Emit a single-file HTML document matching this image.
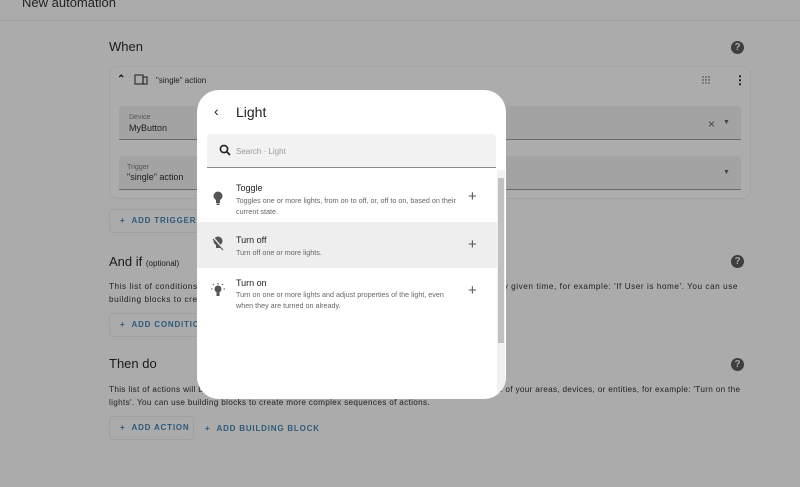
<!DOCTYPE html>
<html><head><style>
*{box-sizing:border-box;margin:0;padding:0}
body{width:800px;height:487px;overflow:hidden;background:#ababab;font-family:"Liberation Sans",sans-serif;position:relative;color:#111}
.a{position:absolute}
.hdr{left:0;top:0;width:800px;height:21px;background:#ababab;border-bottom:1px solid #a2a2a2}
.card{left:109px;top:66px;width:642px;height:133px;border:1px solid #a2a2a2;border-radius:8px;background:#acacac}
.field{background:#a3a3a3;border-bottom:1px solid #6b6b6b;border-radius:4px 4px 0 0}
.lab{font-size:7px;color:#555}
.val{font-size:9px;color:#1e1e1e}
.btn{border:1px solid #a0a0a0;border-radius:4px;height:24px;font-size:8px;letter-spacing:.8px;color:#2f5a78;font-weight:bold;line-height:22px;padding-left:10px;white-space:nowrap;overflow:hidden}
.h2{font-size:13px;color:#1a1a1a}
.p{font-size:8.2px;color:#1e1e1e;line-height:13px;white-space:nowrap}
.q{width:13px;height:13px;border-radius:50%;background:#3e3e3e;color:#aaa;font-size:10px;font-weight:bold;text-align:center;line-height:13px}
.modal{left:197px;top:90px;width:309px;height:309px;background:#fff;border-radius:22px;overflow:hidden}
.it{position:absolute;left:0;width:300px}
.it .t{position:absolute;left:39px;font-size:9px;color:#222}
.it .d{position:absolute;left:39px;font-size:7.2px;color:#666;line-height:11px;width:225px}
.it .pl{position:absolute;left:271px;font-size:15px;color:#555;font-weight:300}
</style></head><body>
<div class="a hdr"></div>
<div class="a" style="left:22px;top:-5px;font-size:13px;color:#222">New automation</div>

<div class="a h2" style="left:109px;top:39px">When</div>
<div class="a q" style="left:731px;top:41px">?</div>
<div class="a card"></div>
<div class="a" style="left:117px;top:74px;font-size:10px;font-weight:bold">&#8963;</div>
<svg class="a" style="left:134px;top:74px" width="14" height="12"><rect x="1" y="1" width="8" height="9" fill="none" stroke="#333" stroke-width="1.2"/><rect x="9" y="3" width="4" height="7" fill="none" stroke="#333" stroke-width="1.2"/></svg>
<div class="a" style="left:156px;top:76px;font-size:8px;color:#1a1a1a">"single" action</div>
<svg class="a" style="left:702px;top:76px" width="8" height="10"><g fill="#333"><circle cx="1" cy="1" r=".7"/><circle cx="4" cy="1" r=".7"/><circle cx="7" cy="1" r=".7"/><circle cx="1" cy="4" r=".7"/><circle cx="4" cy="4" r=".7"/><circle cx="7" cy="4" r=".7"/><circle cx="1" cy="7" r=".7"/><circle cx="4" cy="7" r=".7"/><circle cx="7" cy="7" r=".7"/></g></svg>
<div class="a" style="left:734px;top:73px;font-size:12px;font-weight:bold">⋮</div>
<div class="a field" style="left:119px;top:106px;width:622px;height:34px"></div>
<div class="a lab" style="left:129px;top:114px">Device</div>
<div class="a val" style="left:129px;top:123px">MyButton</div>
<div class="a" style="left:708px;top:117px;font-size:12px;color:#444">×</div>
<div class="a" style="left:723px;top:119px;font-size:7px;color:#444">▼</div>
<div class="a field" style="left:119px;top:156px;width:622px;height:34px"></div>
<div class="a lab" style="left:127px;top:164px">Trigger</div>
<div class="a val" style="left:127px;top:172px">"single" action</div>
<div class="a" style="left:723px;top:169px;font-size:7px;color:#444">▼</div>
<div class="a btn" style="left:109px;top:209px;width:90px">+ &nbsp;ADD TRIGGER</div>

<div class="a h2" style="left:109px;top:254px">And if <span style="font-size:8px">(optional)</span></div>
<div class="a q" style="left:731px;top:255px">?</div>
<div class="a p" style="left:109px;top:280px;letter-spacing:.55px">This list of conditions must all be true for the actions to be performed. The list is checked at any given time, for example: 'If User is home'. You can use<br>building blocks to create more complex conditions.</div>
<div class="a btn" style="left:109px;top:313px;width:95px">+ &nbsp;ADD CONDITION</div>

<div class="a h2" style="left:109px;top:356px">Then do</div>
<div class="a q" style="left:731px;top:358px">?</div>
<div class="a p" style="left:109px;top:383px;letter-spacing:.32px">This list of actions will be performed in sequence when the automation runs. Actions can control one of your areas, devices, or entities, for example: 'Turn on the<br>lights'. You can use building blocks to create more complex sequences of actions.</div>
<div class="a btn" style="left:109px;top:416px;width:85px">+ &nbsp;ADD ACTION</div>
<div class="a" style="left:205px;top:424px;font-size:8px;letter-spacing:.8px;color:#2f5a78;font-weight:bold">+ &nbsp;ADD BUILDING BLOCK</div>

<div class="a modal">
  <div class="a" style="left:17px;top:13px;font-size:14px;color:#222">‹</div>
  <div class="a" style="left:39px;top:14px;font-size:14px;color:#222">Light</div>
  <div class="a" style="left:10px;top:44px;width:289px;height:34px;background:#f2f2f2;border-bottom:1px solid #8a8a8a;border-radius:4px 4px 0 0"></div>
  <svg class="a" style="left:22px;top:54px" width="12" height="12"><circle cx="5" cy="5" r="3.6" fill="none" stroke="#222" stroke-width="1.6"/><line x1="7.5" y1="7.5" x2="11" y2="11" stroke="#222" stroke-width="1.8"/></svg>
  <div class="a" style="left:39px;top:57px;font-size:8px;color:#999">Search · Light</div>
  <div class="it" style="top:88px;height:44px">
    <svg class="a" style="left:16px;top:13px" width="10" height="15"><circle cx="5" cy="5" r="4.5" fill="#555"/><rect x="3" y="8" width="4" height="4" fill="#555"/><rect x="3.5" y="12.5" width="3" height="1.5" fill="#555"/></svg>
    <div class="t" style="top:5px">Toggle</div>
    <div class="d" style="top:17px">Toggles one or more lights, from on to off, or, off to on, based on their current state.</div>
    <div class="pl" style="top:10px">+</div>
  </div>
  <div class="it" style="top:132px;height:46px;background:#eeeeee">
    <svg class="a" style="left:15px;top:14px" width="12" height="15"><circle cx="6" cy="5" r="4.5" fill="#555"/><rect x="4" y="8" width="4" height="4" fill="#555"/><line x1="1" y1="1" x2="11" y2="13" stroke="#eee" stroke-width="1.5"/><line x1="1" y1="3" x2="11" y2="14" stroke="#555" stroke-width="1"/></svg>
    <div class="t" style="top:13px">Turn off</div>
    <div class="d" style="top:25px">Turn off one or more lights.</div>
    <div class="pl" style="top:14px">+</div>
  </div>
  <div class="it" style="top:178px;height:46px">
    <svg class="a" style="left:13px;top:15px" width="16" height="16"><circle cx="8" cy="6" r="3.5" fill="#555"/><rect x="6.5" y="9" width="3" height="4" fill="#555"/><g stroke="#555" stroke-width="1"><line x1="8" y1="0" x2="8" y2="1.5"/><line x1="1" y1="6" x2="2.5" y2="6"/><line x1="13.5" y1="6" x2="15" y2="6"/><line x1="3" y1="1" x2="4" y2="2"/><line x1="13" y1="1" x2="12" y2="2"/></g></svg>
    <div class="t" style="top:10px">Turn on</div>
    <div class="d" style="top:21px">Turn on one or more lights and adjust properties of the light, even when they are turned on already.</div>
    <div class="pl" style="top:14px">+</div>
  </div>
  <div class="a" style="left:300px;top:80px;width:8px;height:229px;background:#f1f1f1"></div>
  <div class="a" style="left:301px;top:88px;width:6px;height:165px;background:#c1c1c1"></div>
</div>
</body></html>
